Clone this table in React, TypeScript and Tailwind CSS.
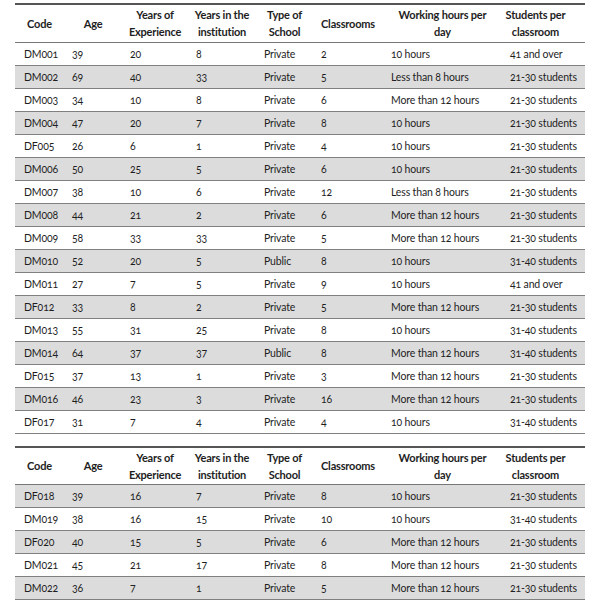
type Row = [string, string, string, string, string, string, string, string];

const first: Row[] = [
  ["DM001", "39", "20", "8", "Private", "2", "10 hours", "41 and over"],
  ["DM002", "69", "40", "33", "Private", "5", "Less than 8 hours", "21-30 students"],
  ["DM003", "34", "10", "8", "Private", "6", "More than 12 hours", "21-30 students"],
  ["DM004", "47", "20", "7", "Private", "8", "10 hours", "21-30 students"],
  ["DF005", "26", "6", "1", "Private", "4", "10 hours", "21-30 students"],
  ["DM006", "50", "25", "5", "Private", "6", "10 hours", "21-30 students"],
  ["DM007", "38", "10", "6", "Private", "12", "Less than 8 hours", "21-30 students"],
  ["DM008", "44", "21", "2", "Private", "6", "More than 12 hours", "21-30 students"],
  ["DM009", "58", "33", "33", "Private", "5", "More than 12 hours", "21-30 students"],
  ["DM010", "52", "20", "5", "Public", "8", "10 hours", "31-40 students"],
  ["DM011", "27", "7", "5", "Private", "9", "10 hours", "41 and over"],
  ["DF012", "33", "8", "2", "Private", "5", "More than 12 hours", "21-30 students"],
  ["DM013", "55", "31", "25", "Private", "8", "10 hours", "31-40 students"],
  ["DM014", "64", "37", "37", "Public", "8", "More than 12 hours", "31-40 students"],
  ["DF015", "37", "13", "1", "Private", "3", "More than 12 hours", "21-30 students"],
  ["DM016", "46", "23", "3", "Private", "16", "More than 12 hours", "21-30 students"],
  ["DF017", "31", "7", "4", "Private", "4", "10 hours", "31-40 students"],
];

const second: Row[] = [
  ["DF018", "39", "16", "7", "Private", "8", "10 hours", "21-30 students"],
  ["DM019", "38", "16", "15", "Private", "10", "10 hours", "31-40 students"],
  ["DF020", "40", "15", "5", "Private", "6", "More than 12 hours", "21-30 students"],
  ["DM021", "45", "21", "17", "Private", "8", "More than 12 hours", "21-30 students"],
  ["DM022", "36", "7", "1", "Private", "5", "More than 12 hours", "21-30 students"],
];

const widths = ["w-[49px]", "w-[58px]", "w-[66px]", "w-[68px]", "w-[57px]", "w-[70px]", "w-[119px]", "w-[83px]"];

function DataTable({ rows, grayFirst }: { rows: Row[]; grayFirst: boolean }) {
  return (
    <table className="w-[570px] table-fixed border-collapse border-t-2 border-[#555]">
      <colgroup>
        {widths.map((w, i) => (
          <col key={i} className={w} />
        ))}
      </colgroup>
      <thead>
        <tr className="h-[38px] border-b border-[#777] text-[11px] leading-[17px] font-bold tracking-[-0.2px] whitespace-nowrap">
          <th className="p-0 text-center">Code</th>
          <th className="p-0 text-center">Age</th>
          <th className="p-0 text-center">
            Years of
            <br />
            Experience
          </th>
          <th className="p-0 text-center">
            Years in the
            <br />
            institution
          </th>
          <th className="p-0 text-center">
            Type of
            <br />
            School
          </th>
          <th className="p-0 text-center">Classrooms</th>
          <th className="p-0 text-center">
            Working hours per
            <br />
            day
          </th>
          <th className="p-0 pr-4 text-center">
            Students per
            <br />
            classroom
          </th>
        </tr>
      </thead>
      <tbody>
        {rows.map((r, i) => {
          const gray = grayFirst ? i % 2 === 0 : i % 2 === 1;
          return (
            <tr key={r[0]} className={`h-[23px] border-b border-[#808080] ${gray ? "bg-[#dcdcdc]" : "bg-white"}`}>
              {r.map((c, j) => (
                <td
                  key={j}
                  className={`p-0 ${j === 0 ? "pl-[9px]" : "pl-[8px]"} text-left align-middle whitespace-nowrap`}
                >
                  {c}
                </td>
              ))}
            </tr>
          );
        })}
      </tbody>
    </table>
  );
}

export default function App() {
  return (
    <div
      className="min-h-screen w-[589px] bg-white pt-[3px] pl-[15px] text-[10.5px] leading-[14px] tracking-[-0.15px] text-[#1e1e1e] [font-variant-numeric:oldstyle-nums]"
      style={{ fontFamily: 'Lato, "Noto Sans", sans-serif' }}
    >
      <DataTable rows={first} grayFirst={false} />
      <div className="h-[12px]" />
      <DataTable rows={second} grayFirst={true} />
    </div>
  );
}
